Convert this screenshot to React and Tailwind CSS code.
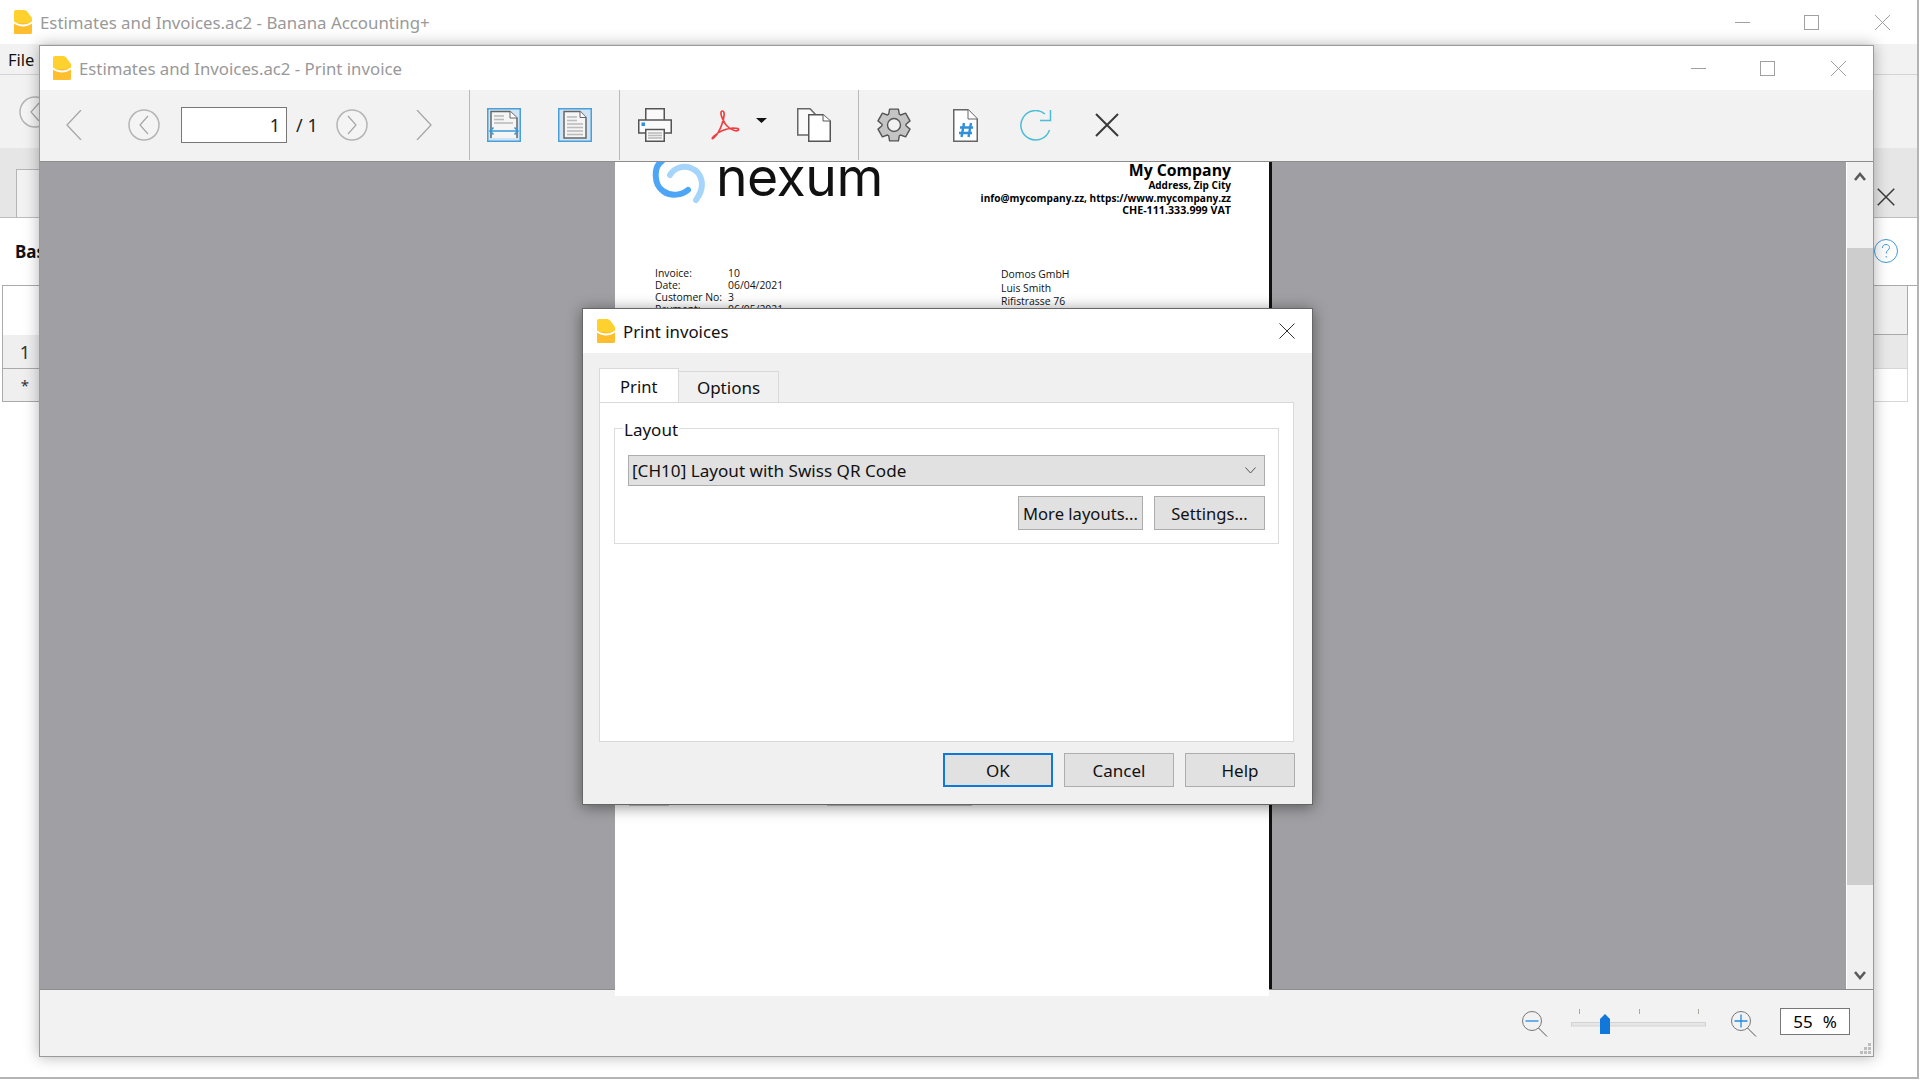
import React from 'react';

const uiFont = { fontFamily: '"Noto Sans", "Open Sans", sans-serif' };

const AppIcon = ({ className }) => (
  <svg className={className} width="18" height="24" viewBox="0 0 18 24">
    <path d="M2 0H9.5C12 0 13 1 14 2.5L18 8V22C18 23.2 17.2 24 16 24H1.5C.6 24 0 23.3 0 22.5V2C0 .8.8 0 2 0Z" fill="#ffd12e" />
    <path d="M0 13H18V22C18 23.2 17.2 24 16 24H1.5C.6 24 0 23.3 0 22.5Z" fill="#ffbe2e" />
    <path d="M0 11.5C5 15.5 13 15.5 18 11.5V13.5C13 17.5 5 17.5 0 13.5Z" fill="#ffffff" />
  </svg>
);

const WindowControls = () => (
  <div className="flex items-center">
    <svg width="15" height="15"><path d="M0 7.5H15" stroke="#a0a0a0" /></svg>
    <svg className="ml-[54px]" width="15" height="15"><rect x=".5" y=".5" width="14" height="14" fill="none" stroke="#a0a0a0" /></svg>
    <svg className="ml-[56px]" width="15" height="15"><path d="M0 0L15 15M15 0L0 15" stroke="#a0a0a0" /></svg>
  </div>
);

const Chevron = ({ right }) => (
  <svg width="16" height="30" viewBox="0 0 16 30">
    <path d={right ? 'M1 0L15 15L1 30' : 'M15 0L1 15L15 30'} fill="none" stroke="#a6a6a6" strokeWidth="1.3" />
  </svg>
);

const CircleNav = ({ right, className }) => (
  <svg className={className} width="32" height="32" viewBox="0 0 32 32">
    <circle cx="16" cy="16" r="15" fill="#f4f4f4" stroke="#b5b5b5" strokeWidth="1.5" />
    <path d={right ? 'M12 7L20 16L12 25' : 'M20 7L12 16L20 25'} fill="none" stroke="#a6a6a6" strokeWidth="1.2" />
  </svg>
);

const Separator = () => <div className="ml-[27px] w-px self-stretch bg-[#b9b9b9]" />;

const DocLines = ({ x1, x2, ys }) => ys.map((y) => <path key={y} d={`M${x1} ${y}H${x2}`} stroke="#bcbcbc" strokeWidth="1.6" />);

const FitWidthIcon = ({ className }) => (
  <svg className={className} width="34" height="34" viewBox="0 0 34 34">
    <rect x=".75" y=".75" width="32.5" height="32.5" fill="#cfe5f5" stroke="#4a9fd8" strokeWidth="1.5" />
    <path d="M4 30V3.5H23L30 10V30" fill="#f5f5f5" stroke="#666" strokeWidth="1.5" />
    <path d="M23 3.5V10H30" fill="#fff" stroke="#666" />
    <DocLines x1={7} x2={17} ys={[8, 11.5]} />
    <DocLines x1={7} x2={26} ys={[15]} />
    <path d="M3 23H31M6.5 19.5L3 23L6.5 26.5M27.5 19.5L31 23L27.5 26.5" fill="none" stroke="#3d96d6" strokeWidth="1.6" />
  </svg>
);

const FitPageIcon = ({ className }) => (
  <svg className={className} width="34" height="34" viewBox="0 0 34 34">
    <rect x=".75" y=".75" width="32.5" height="32.5" fill="#cfe5f5" stroke="#4a9fd8" strokeWidth="1.5" />
    <path d="M6 30V3.5H22L28 9.5V30Z" fill="#f5f5f5" stroke="#666" strokeWidth="1.5" />
    <path d="M22 3.5V9.5H28" fill="#fff" stroke="#666" />
    <DocLines x1={9} x2={19} ys={[9, 12.5]} />
    <DocLines x1={9} x2={25} ys={[16, 19.5, 23, 26.5]} />
  </svg>
);

const PrinterIcon = ({ className }) => (
  <svg className={className} width="34" height="34" viewBox="0 0 34 34">
    <rect x="7.75" y=".75" width="18.5" height="12" fill="#fafafa" stroke="#555" strokeWidth="1.5" />
    <rect x=".75" y="12" width="32.5" height="13" fill="#fafafa" stroke="#555" strokeWidth="1.5" />
    <rect x="3.5" y="14.5" width="3.5" height="3.5" fill="#2f8fdc" />
    <rect x="7.75" y="21.5" width="18.5" height="11.75" fill="#fafafa" stroke="#555" strokeWidth="1.5" />
    <DocLines x1={10} x2={24} ys={[25, 27.5, 30]} />
  </svg>
);

const PdfIcon = ({ className }) => (
  <svg className={className} width="30" height="31" viewBox="0 0 30 31">
    <path d="M11.5 1C14 1 13.5 7 11 14C9 20 5 26 2.5 28C.5 29.5 1 28 3 26C7 22 14 19 22 18C27 18 28 19 27.5 20C26 22 20 20 16 16C13 13 9.5 5 10 3C10 1.5 11 1 11.5 1Z" fill="none" stroke="#ee4044" strokeWidth="1.7" />
  </svg>
);

const CopyIcon = ({ className }) => (
  <svg className={className} width="34" height="34" viewBox="0 0 34 34">
    <path d="M.75 27V.75H13L19 7V27Z" fill="#fafafa" stroke="#666" strokeWidth="1.5" />
    <path d="M11.75 33.25V6.75H26L33.25 13V33.25Z" fill="#ffffff" stroke="#555" strokeWidth="1.5" />
    <path d="M26 6.75V13H33.25" fill="#fff" stroke="#555" />
  </svg>
);

// six tooth gear, points worked out from the angles
const gearPath = () => {
  const points = [];
  for (let i = 0; i < 6; i++) {
    const a = (i * Math.PI) / 3 + Math.PI / 6;
    [[-0.46, 12], [-0.27, 16.5], [0.27, 16.5], [0.46, 12]].forEach(([off, r]) => {
      points.push(`${(17 + r * Math.cos(a + off)).toFixed(1)} ${(17 + r * Math.sin(a + off)).toFixed(1)}`);
    });
  }
  return `M${points.join('L')}Z`;
};

const GearIcon = ({ className }) => (
  <svg className={className} width="34" height="34" viewBox="0 0 34 34">
    <path d={gearPath()} fill="#c4c4c4" stroke="#555" strokeWidth="1.4" strokeLinejoin="round" />
    <circle cx="17" cy="17" r="6.5" fill="#f2f2f2" stroke="#555" strokeWidth="1.4" />
  </svg>
);

const HashDocIcon = ({ className }) => (
  <svg className={className} width="25" height="33" viewBox="0 0 25 33">
    <path d="M.75 32.25V.75H15L24.25 10V32.25Z" fill="#fff" stroke="#666" strokeWidth="1.5" />
    <path d="M15 .75V10H24.25" fill="#fff" stroke="#666" />
    <path d="M11 14L8.5 28M18 14L15.5 28M7 18.5H20M6 24H19" fill="none" stroke="#2f8fd8" strokeWidth="2.4" />
  </svg>
);

const RefreshIcon = ({ className }) => (
  <svg className={className} width="32" height="31" viewBox="0 0 32 31">
    <path d="M25 4A14.7 14.7 0 1 0 29.5 20" fill="none" stroke="#4bbdd6" strokeWidth="1.5" />
    <path d="M20 10.5H30.5V0" fill="none" stroke="#4bbdd6" strokeWidth="1.5" />
  </svg>
);

const CloseIcon = ({ className, size = 24 }) => (
  <svg className={className} width={size} height={size} viewBox="0 0 24 24">
    <path d="M1 1L23 23M23 1L1 23" stroke="#3a3a3a" strokeWidth="2" />
  </svg>
);

const ZoomIcon = ({ plus, className }) => (
  <svg className={className} width="26" height="26" viewBox="0 0 26 26">
    <circle cx="10" cy="10" r="9.5" fill="none" stroke="#777" />
    <path d="M16.5 17L25 25.5" stroke="#555" />
    <path d={plus ? 'M3.5 10H16.5M10 3.5V16.5' : 'M3.5 10H16.5'} stroke="#1f8ae0" strokeWidth="1.3" />
  </svg>
);

const SliderGraphic = ({ className }) => (
  <svg className={className} width="136" height="26" viewBox="0 0 136 26">
    <path d="M8.5 1V6M68.5 1V6M127.5 1V6" stroke="#a9a9a0" />
    <rect x=".5" y="14.5" width="134" height="3.5" fill="#e6e6e6" stroke="#d2d4d2" />
    <path d="M29 11L34 6L39 11V26H29Z" fill="#1277db" />
  </svg>
);

const Swirl = ({ className }) => (
  <svg className={className} width="56" height="42" viewBox="10 7 56 42">
    <path d="M21 6C12 12 13 30 22 36C30 42 41 40 47 35" fill="none" stroke="#4da6f5" strokeWidth="6" strokeLinecap="round" />
    <path d="M29 20C33 13 42 10 50 13C60 17 66 30 55 45" fill="none" stroke="#a5d5fb" strokeWidth="6" strokeLinecap="round" />
  </svg>
);

const DialogButton = ({ children, className = '', primary }) => (
  <div className={`flex items-center justify-center pt-[2px] bg-[#e1e1e1] border ${primary ? 'border-2 border-[#0f78d8]' : 'border-[#adadad]'} ${className}`}>
    {children}
  </div>
);

const PageDocument = () => (
  <div className="relative z-10 ml-[575px] w-[654px] h-[834px] flex-none bg-white" style={{ fontFamily: '"Open Sans", sans-serif' }}>
    <div className="flex items-start h-[100px]">
      <Swirl className="ml-[36px] flex-none" />
      <div className="ml-[9px] mt-[-5px] text-[53.5px] leading-[40px] text-[#111] font-['Inter'] tracking-[-0.5px]">nexum</div>
      <div className="ml-auto mr-[38px] text-right font-bold text-black">
        <div className="text-[15.8px] leading-[16px]">My Company</div>
        <div className="text-[10px] leading-[13px] mt-[1px]">Address, Zip City</div>
        <div className="text-[10.1px] leading-[12px]">info@mycompany.zz, https://www.mycompany.zz</div>
        <div className="text-[10.7px] leading-[12px]">CHE-111.333.999 VAT</div>
      </div>
    </div>
    <div className="mt-[5px] flex text-[10.4px] text-[#111]">
      <div className="ml-[40px] w-[73px] leading-[12px]">
        <div>Invoice:</div>
        <div>Date:</div>
        <div>Customer No:</div>
        <div>Payment:</div>
      </div>
      <div className="w-[273px] leading-[12px]">
        <div>10</div>
        <div>06/04/2021</div>
        <div>3</div>
        <div>06/05/2021</div>
      </div>
      <div className="leading-[13.5px] pt-[1px]">
        <div>Domos GmbH</div>
        <div>Luis Smith</div>
        <div>Rifistrasse 76</div>
      </div>
    </div>
    <div className="ml-[14px] mt-[490px] flex h-px">
      <div className="w-[40px] bg-[#c4c4c4]" />
      <div className="ml-[158px] w-[145px] bg-[#c4c4c4]" />
    </div>
  </div>
);

const PreviewToolbar = () => (
  <div className="h-[72px] flex items-center bg-[#f2f2f2] border-b border-[#8c8c8c] flex-none pl-[26px] pb-px">
    <Chevron />
    <CircleNav className="ml-[46px]" />
    <div className="ml-[21px] w-[106px] h-[36px] border border-[#777] bg-white flex items-center justify-end pr-[6px] text-[18px] text-[#222]">1</div>
    <div className="ml-[9px] w-[20px] text-[18px] text-[#222] whitespace-nowrap">/ 1</div>
    <CircleNav right className="ml-[20px]" />
    <div className="ml-[48px]"><Chevron right /></div>
    <div className="ml-[37px] w-px self-stretch bg-[#b9b9b9]" />
    <FitWidthIcon className="ml-[17px]" />
    <FitPageIcon className="ml-[37px]" />
    <Separator />
    <PrinterIcon className="ml-[18px]" />
    <PdfIcon className="ml-[39px]" />
    <svg className="ml-[15px] mb-[10px]" width="11" height="5"><path d="M0 0H11L5.5 5Z" fill="#111" /></svg>
    <CopyIcon className="ml-[30px]" />
    <Separator />
    <GearIcon className="ml-[18px]" />
    <HashDocIcon className="ml-[42px]" />
    <RefreshIcon className="ml-[42px]" />
    <CloseIcon className="ml-[43px]" />
  </div>
);

const PreviewScrollbar = () => (
  <div className="ml-auto w-[27px] flex-none flex flex-col bg-[#f0f0f0] border-l border-white">
    <div className="h-[86px] flex justify-center pt-[10px]">
      <svg width="12" height="9"><path d="M1 8L6 2L11 8" fill="none" stroke="#5a5a5a" strokeWidth="2.6" /></svg>
    </div>
    <div className="h-[637px] bg-[#cdcdcd]" />
    <div className="flex-1 flex justify-center items-end pb-[9px]">
      <svg width="12" height="9"><path d="M1 1L6 7L11 1" fill="none" stroke="#5a5a5a" strokeWidth="2.6" /></svg>
    </div>
  </div>
);

const PreviewWindow = () => (
  <div className="absolute left-[39px] top-[45px] w-[1835px] h-[1012px] flex flex-col border border-[#9a9a9a] bg-white shadow-[0_0_14px_rgba(0,0,0,0.3)]">
    <div className="h-[44px] flex items-center flex-none pl-[13px] pr-[27px] bg-white">
      <AppIcon />
      <span className="ml-[8px] pt-[1px] text-[16.8px] text-[#999]">Estimates and Invoices.ac2 - Print invoice</span>
      <div className="ml-auto"><WindowControls /></div>
    </div>
    <PreviewToolbar />
    <div className="flex-1 min-h-0 flex bg-[#a09fa3]">
      <PageDocument />
      <div className="w-[3px] flex-none bg-[#111]" />
      <PreviewScrollbar />
    </div>
    <div className="h-[67px] flex-none relative flex items-center justify-end bg-[#f2f2f2] border-t border-[#8c8c8c] pr-[23px]">
      <ZoomIcon className="mt-[1px]" />
      <SliderGraphic className="ml-[23px] mb-[4px]" />
      <ZoomIcon plus className="ml-[24px] mt-[1px]" />
      <div className="ml-[23px] mb-[3px] w-[70px] h-[27px] flex items-center justify-center gap-[10px] bg-white border border-[#777] text-[17px] text-black">
        <span>55</span><span>%</span>
      </div>
      <svg className="absolute right-[2px] bottom-[2px]" width="11" height="11" fill="#bdbdbd">
        <rect x="8" y="0" width="3" height="3" /><rect x="4" y="4" width="3" height="3" /><rect x="8" y="4" width="3" height="3" />
        <rect x="0" y="8" width="3" height="3" /><rect x="4" y="8" width="3" height="3" /><rect x="8" y="8" width="3" height="3" />
      </svg>
    </div>
  </div>
);

const PrintDialog = () => (
  <div className="absolute z-20 left-[582px] top-[308px] w-[731px] h-[497px] flex flex-col bg-[#f0f0f0] border border-[#666] shadow-[0_2px_14px_rgba(0,0,0,0.45)] text-[17px] text-[#111]">
    <div className="h-[44px] flex items-center flex-none bg-white pl-[14px] pr-[17px]">
      <AppIcon />
      <span className="ml-[8px] pt-[1px] text-[16.8px]">Print invoices</span>
      <svg className="ml-auto" width="16" height="16"><path d="M.5 .5L15.5 15.5M15.5 .5L.5 15.5" stroke="#333" /></svg>
    </div>
    <div className="pl-[16px] pr-[18px] pt-[16px] flex-1 flex flex-col">
      <div className="flex items-end h-[33px]">
        <div className="relative z-10 w-[80px] h-[34px] flex items-center pl-[20px] pt-[3px] text-[16.6px] bg-white border border-b-0 border-[#d9d9d9]">Print</div>
        <div className="w-[100px] h-[31px] flex items-center justify-center pt-[2px] bg-[#f0f0f0] border border-l-0 border-b-0 border-[#d9d9d9]">Options</div>
      </div>
      <div className="h-[340px] bg-white border border-[#d9d9d9] px-[14px] pt-[25px]">
        <div className="relative h-[116px] border border-[#dcdcdc] px-[13px] pt-[26px]">
          <span className="absolute left-[8px] top-[-11px] bg-white px-[1px] leading-[24px]">Layout</span>
          <div className="h-[31px] flex items-center justify-between bg-[#e1e1e1] border border-[#adadad] pl-[3px] pr-[8px]">
            <span className="pt-[1px] text-[17.1px]">[CH10] Layout with Swiss QR Code</span>
            <svg width="11" height="7"><path d="M.5 .5L5.5 6L10.5 .5" fill="none" stroke="#555" /></svg>
          </div>
          <div className="flex justify-end gap-[11px] mt-[10px]">
            <DialogButton className="w-[125px] h-[34px] text-[16.6px]">More layouts...</DialogButton>
            <DialogButton className="w-[111px] h-[34px] text-[16.6px]">Settings...</DialogButton>
          </div>
        </div>
      </div>
      <div className="flex justify-end gap-[11px] mt-[11px] mr-[-1px]">
        <DialogButton primary className="w-[110px] h-[34px]">OK</DialogButton>
        <DialogButton className="w-[110px] h-[34px]">Cancel</DialogButton>
        <DialogButton className="w-[110px] h-[34px]">Help</DialogButton>
      </div>
    </div>
  </div>
);

export default function App() {
  return (
    <div className="relative w-[1920px] h-[1080px] overflow-hidden bg-white" style={uiFont}>
      <div className="w-[1919px] h-[1079px] flex flex-col border-r-2 border-b-2 border-[#b4b4b4] text-[17px] text-[#111]">
        <div className="h-[44px] flex items-center flex-none pl-[14px] pr-[27px] bg-white">
          <AppIcon />
          <span className="ml-[8px] pt-[1px] text-[16.85px] text-[#999]">Estimates and Invoices.ac2 - Banana Accounting+</span>
          <div className="ml-auto"><WindowControls /></div>
        </div>
        <div className="h-[31px] flex items-center flex-none pl-[8px] bg-[#f2f2f2] border-b border-[#d4d4d4]"><span className="text-[16.5px] mt-[2px]">File</span></div>
        <div className="h-[73px] flex items-center flex-none pl-[19px] bg-[#f2f2f2]">
          <CircleNav />
        </div>
        <div className="h-[70px] flex items-end justify-between flex-none pl-[16px] pr-[22px] bg-[#e6e6e6] border-b border-[#bdbdbd]">
          <div className="w-[120px] h-[48px] bg-[#f2f2f2] border border-b-0 border-[#b5b5b5]" />
          <CloseIcon className="mb-[11px]" size={18} />
        </div>
        <div className="h-[67px] flex items-center justify-between flex-none pl-[15px] pr-[19px]">
          <span className="font-bold pt-[1px]">Basic data</span>
          <svg width="24" height="24" viewBox="0 0 24 24" className="mb-[1px]">
            <circle cx="12" cy="12" r="11.5" fill="#fff" stroke="#3f9ad6" />
            <path d="M8.5 9C8.5 6.5 10 5.5 12 5.5C14 5.5 15.5 6.8 15.5 8.6C15.5 11 12.2 11.2 12.2 14.5M12.2 17V18.5" fill="none" stroke="#3f9ad6" />
          </svg>
        </div>
        <div className="ml-[2px] border-t border-l border-[#aaa]">
          <div className="w-[1905px] h-[49px] flex">
            <div className="w-[36px] flex-none" />
            <div className="flex-1 bg-[#efefef] border-r border-b border-[#aaa]" />
          </div>
          <div className="w-[1905px] h-[34px] flex">
            <div className="w-[36px] flex-none bg-[#efefef] border-b border-[#aaa] flex items-center justify-center pl-[8px] pt-[1px] text-[18px] text-[#333]">1</div>
            <div className="flex-1 bg-[#e8e8e8] border-r border-b border-[#d6d6d6]" />
          </div>
          <div className="w-[1905px] h-[33px] flex">
            <div className="w-[36px] flex-none bg-[#efefef] border-b border-[#aaa] flex items-center justify-center pl-[8px] text-[15px] text-[#333]">*</div>
            <div className="flex-1 bg-white border-r border-b border-[#d6d6d6]" />
          </div>
        </div>
      </div>
      <PreviewWindow />
      <PrintDialog />
    </div>
  );
}
